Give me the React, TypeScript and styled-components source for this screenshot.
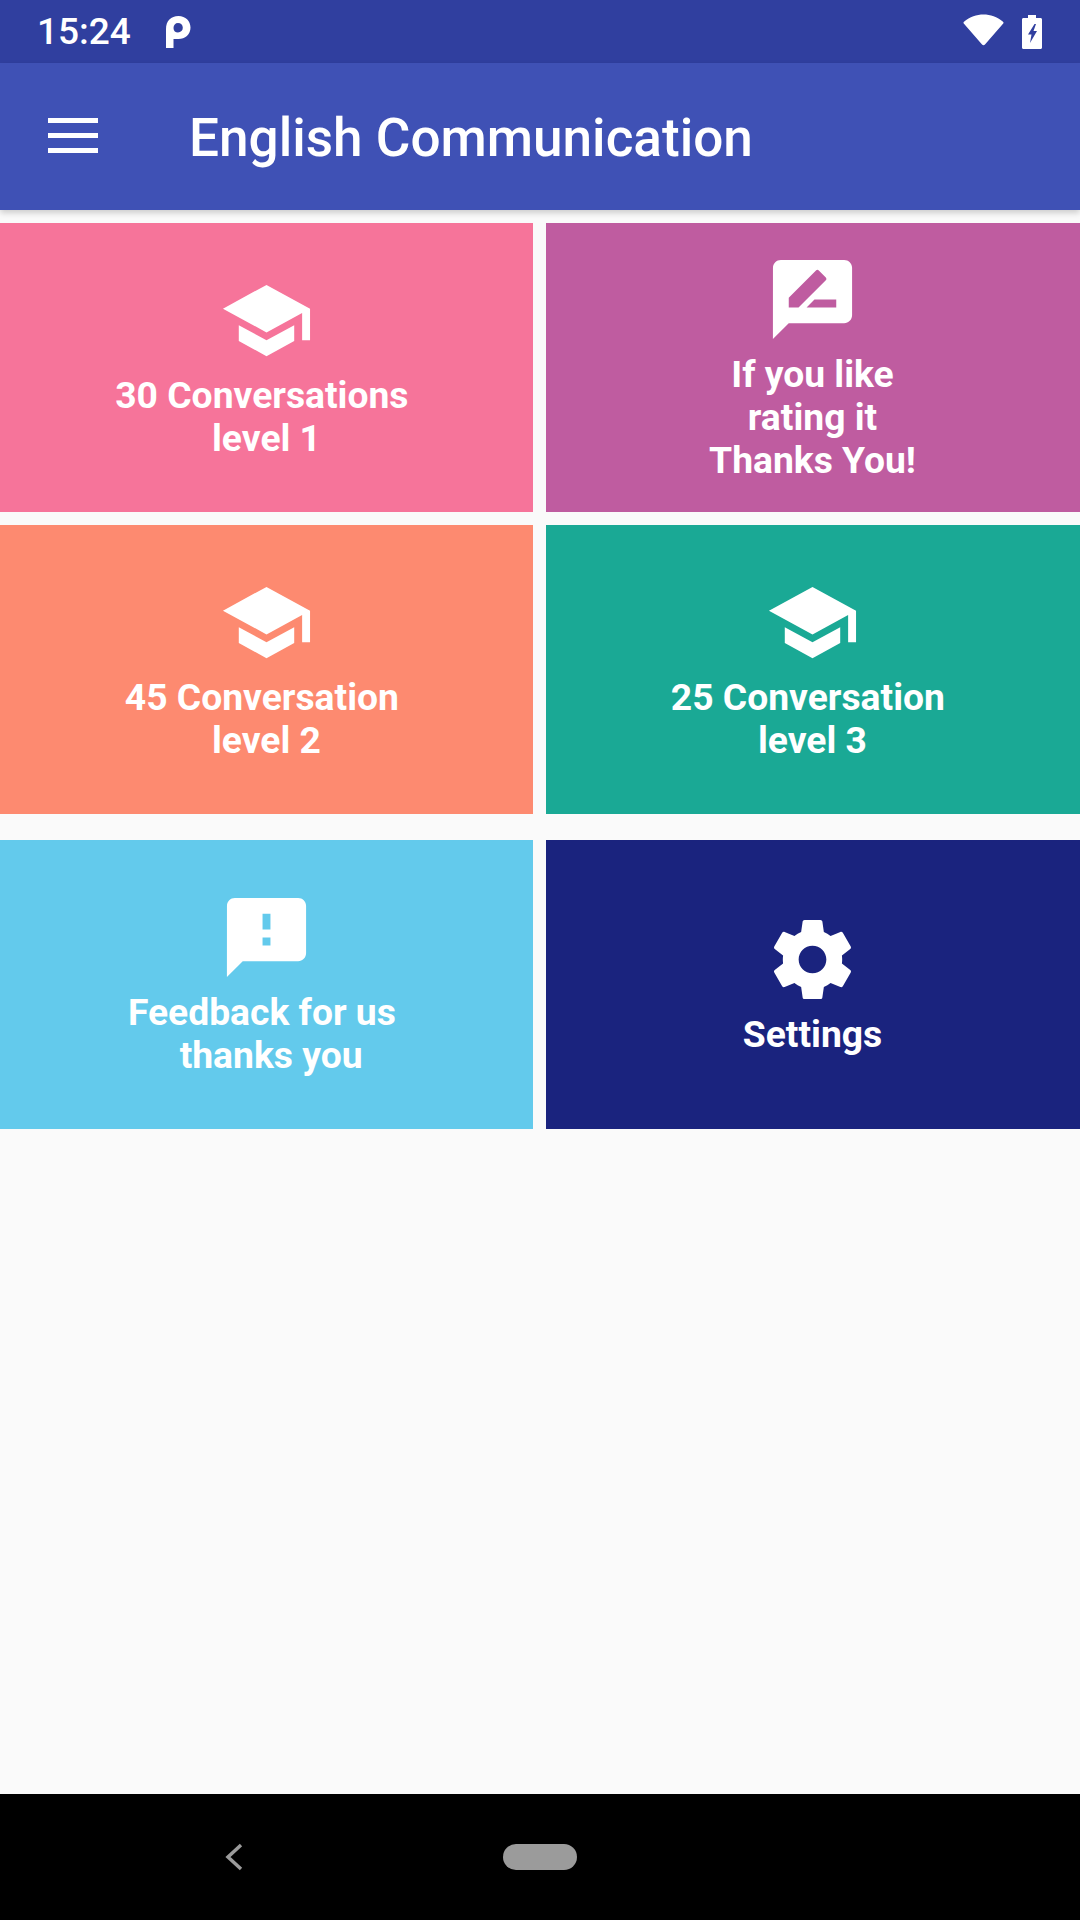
import styled, { createGlobalStyle } from 'styled-components'

const GlobalStyle = createGlobalStyle`
  html, body {
    margin: 0;
    padding: 0;
    background: #fafafa;
    font-family: Roboto, "Liberation Sans", sans-serif;
  }
`

const Page = styled.div`
  width: 1080px;
  height: 1920px;
  display: flex;
  flex-direction: column;
  overflow: hidden;
  background: #fafafa;
`

const StatusBar = styled.div`
  height: 63px;
  flex: none;
  display: flex;
  align-items: center;
  padding: 0 38px 0 37px;
  box-sizing: border-box;
  background: #303f9f;
  color: #fff;
`

const Clock = styled.span`
  font-size: 37px;
  font-weight: 500;
  line-height: 63px;
  margin-right: 34px;
`

const Spacer = styled.div`
  flex: 1;
`

const WifiIcon = styled.svg`
  width: 41px;
  height: 32px;
  margin: 0 18px 3px 0;
`

const BatteryIcon = styled.svg`
  width: 20px;
  height: 34px;
`

const AppBar = styled.header`
  height: 147px;
  flex: none;
  display: flex;
  align-items: center;
  padding-left: 48px;
  box-sizing: border-box;
  background: #3f51b5;
  box-shadow: 0 3px 6px rgba(0, 0, 0, 0.18);
  position: relative;
`

const MenuButton = styled.div`
  width: 50px;
  display: flex;
  flex-direction: column;
  gap: 10px;
  margin: 0 91px 2px 0;
`

const MenuLine = styled.span`
  height: 5px;
  background: #fff;
`

const Title = styled.h1`
  margin: 5px 0 0;
  color: #fff;
  font-size: 53.1px;
  font-weight: 500;
  line-height: 1;
`

const Content = styled.main`
  flex: 1;
  padding-top: 13px;
`

const Grid = styled.div<{ $offset?: number }>`
  display: grid;
  grid-template-columns: 533px 534px;
  grid-auto-rows: 289px;
  gap: 13px;
  margin-top: ${props => props.$offset ?? 0}px;
`

const Tile = styled.div<{ $color: string }>`
  display: flex;
  flex-direction: column;
  align-items: center;
  justify-content: center;
  padding-bottom: 2px;
  box-sizing: border-box;
  background: ${props => props.$color};
  color: #fff;

  &:nth-child(even) {
    padding-right: 1px;
  }
`

const TileIcon = styled.svg`
  width: 95px;
  height: 95px;
  fill: #fff;
  flex: none;
`

const TileLabel = styled.div`
  margin-top: 6px;
  font-size: 37.25px;
  font-weight: 700;
  line-height: 43px;
  text-align: center;
  white-space: pre;
`

const NavBar = styled.nav`
  height: 126px;
  flex: none;
  display: flex;
  align-items: center;
  background: #000;
  padding-left: 225px;
`

const BackIcon = styled.svg`
  width: 18px;
  height: 28px;
  margin-right: 260px;
`

const HomePill = styled.div`
  width: 74px;
  height: 26px;
  border-radius: 13px;
  background: #9b9b9b;
`

const icons = {
  school: 'M5 13.18v4L12 21l7-3.82v-4L12 17l-7-3.82zM12 3L1 9l11 6 9-4.91V17h2V9L12 3z',
  rate: 'M20 2H4c-1.1 0-1.99.9-1.99 2L2 22l4-4h14c1.1 0 2-.9 2-2V4c0-1.1-.9-2-2-2zM6 14v-2.47l6.88-6.88c.2-.2.51-.2.71 0l1.77 1.77c.2.2.2.51 0 .71L8.47 14H6zm12 0h-7.5l2-2H18v2z',
  feedback: 'M20 2H4c-1.1 0-1.99.9-1.99 2L2 22l4-4h14c1.1 0 2-.9 2-2V4c0-1.1-.9-2-2-2zm-7 12h-2v-2h2v2zm0-4h-2V6h2v4z',
  settings: 'M19.43 12.98c.04-.32.07-.64.07-.98s-.03-.66-.07-.98l2.11-1.65c.19-.15.24-.42.12-.64l-2-3.46c-.12-.22-.39-.3-.61-.22l-2.49 1c-.52-.4-1.08-.73-1.69-.98l-.38-2.65C14.46 2.18 14.25 2 14 2h-4c-.25 0-.46.18-.49.42l-.38 2.65c-.61.25-1.17.59-1.69.98l-2.49-1c-.23-.09-.49 0-.61.22l-2 3.46c-.13.22-.07.49.12.64l2.11 1.65c-.04.32-.07.65-.07.98s.03.66.07.98l-2.11 1.65c-.19.15-.24.42-.12.64l2 3.46c.12.22.39.3.61.22l2.49-1c.52.4 1.08.73 1.69.98l.38 2.65c.03.24.24.42.49.42h4c.25 0 .46-.18.49-.42l.38-2.65c.61-.25 1.17-.59 1.69-.98l2.49 1c.23.09.49 0 .61-.22l2-3.46c.12-.22.07-.49-.12-.64l-2.11-1.65zM12 15.5c-1.93 0-3.5-1.57-3.5-3.5s1.57-3.5 3.5-3.5 3.5 1.57 3.5 3.5-1.57 3.5-3.5 3.5z',
}

const topTiles = [
  { color: '#f6749a', icon: icons.school, label: '30 Conversations \nlevel 1' },
  { color: '#bf5ca0', icon: icons.rate, label: 'If you like\nrating it\nThanks You!' },
  { color: '#fd8a70', icon: icons.school, label: '45 Conversation \nlevel 2' },
  { color: '#1aa995', icon: icons.school, label: '25 Conversation \nlevel 3' },
]

const bottomTiles = [
  { color: '#63caec', icon: icons.feedback, label: 'Feedback for us \n thanks you' },
  { color: '#1a237e', icon: icons.settings, label: 'Settings' },
]

function TileCard({ color, icon, label }: { color: string; icon: string; label: string }) {
  return (
    <Tile $color={color}>
      <TileIcon viewBox="0 0 24 24">
        <path d={icon} />
      </TileIcon>
      <TileLabel>{label}</TileLabel>
    </Tile>
  )
}

export default function App() {
  return (
    <Page>
      <GlobalStyle />
      <StatusBar>
        <Clock>15:24</Clock>
        <svg width="26" height="32" viewBox="0 0 26 32">
          <path
            fill="#fff"
            fillRule="evenodd"
            d="M1 13C1 5 6 0 13.500 0 20.500 0 25.500 5 25.500 11.500 25.500 18.500 20 23 13.500 23L8.500 23 8.500 32 1 32ZM8.500 12C8.500 15 10.500 16.500 13 16.500 15.800 16.500 17.800 14.500 17.800 11.800 17.800 9 15.800 7 13 7 10.300 7 8.500 9 8.500 12Z"
          />
        </svg>
        <Spacer />
        <WifiIcon viewBox="0 0 42 32">
          <path fill="#fff" d="M21 0C28 0 35 2.200 41 7.500 41.700 8.200 41.700 8.800 41 9.500L22.500 30.800C21.600 31.800 20.400 31.800 19.500 30.800L1 9.500C.3 8.800.3 8.200 1 7.500 7 2.200 14 0 21 0Z" />
        </WifiIcon>
        <BatteryIcon viewBox="0 0 20 34">
          <path fill="#fff" d="M6 0H14V3H18.500C19.400 3 20 3.600 20 4.500V32.500C20 33.400 19.400 34 18.500 34H1.500C.6 34 0 33.400 0 32.500V4.500C0 3.600.6 3 1.500 3H6Z" />
          <path fill="#303f9f" d="M12.500 9 6 19.500H9.500L8 28 15 16H11.500L14 9Z" />
        </BatteryIcon>
      </StatusBar>
      <AppBar>
        <MenuButton>
          <MenuLine />
          <MenuLine />
          <MenuLine />
        </MenuButton>
        <Title>English Communication</Title>
      </AppBar>
      <Content>
        <Grid>
          {topTiles.map(tile => (
            <TileCard key={tile.label} {...tile} />
          ))}
        </Grid>
        <Grid $offset={26}>
          {bottomTiles.map(tile => (
            <TileCard key={tile.label} {...tile} />
          ))}
        </Grid>
      </Content>
      <NavBar>
        <BackIcon viewBox="0 0 18 28">
          <path d="M16 2 3 14 16 26" fill="none" stroke="#9b9b9b" strokeWidth="3.500" />
        </BackIcon>
        <HomePill />
      </NavBar>
    </Page>
  )
}
